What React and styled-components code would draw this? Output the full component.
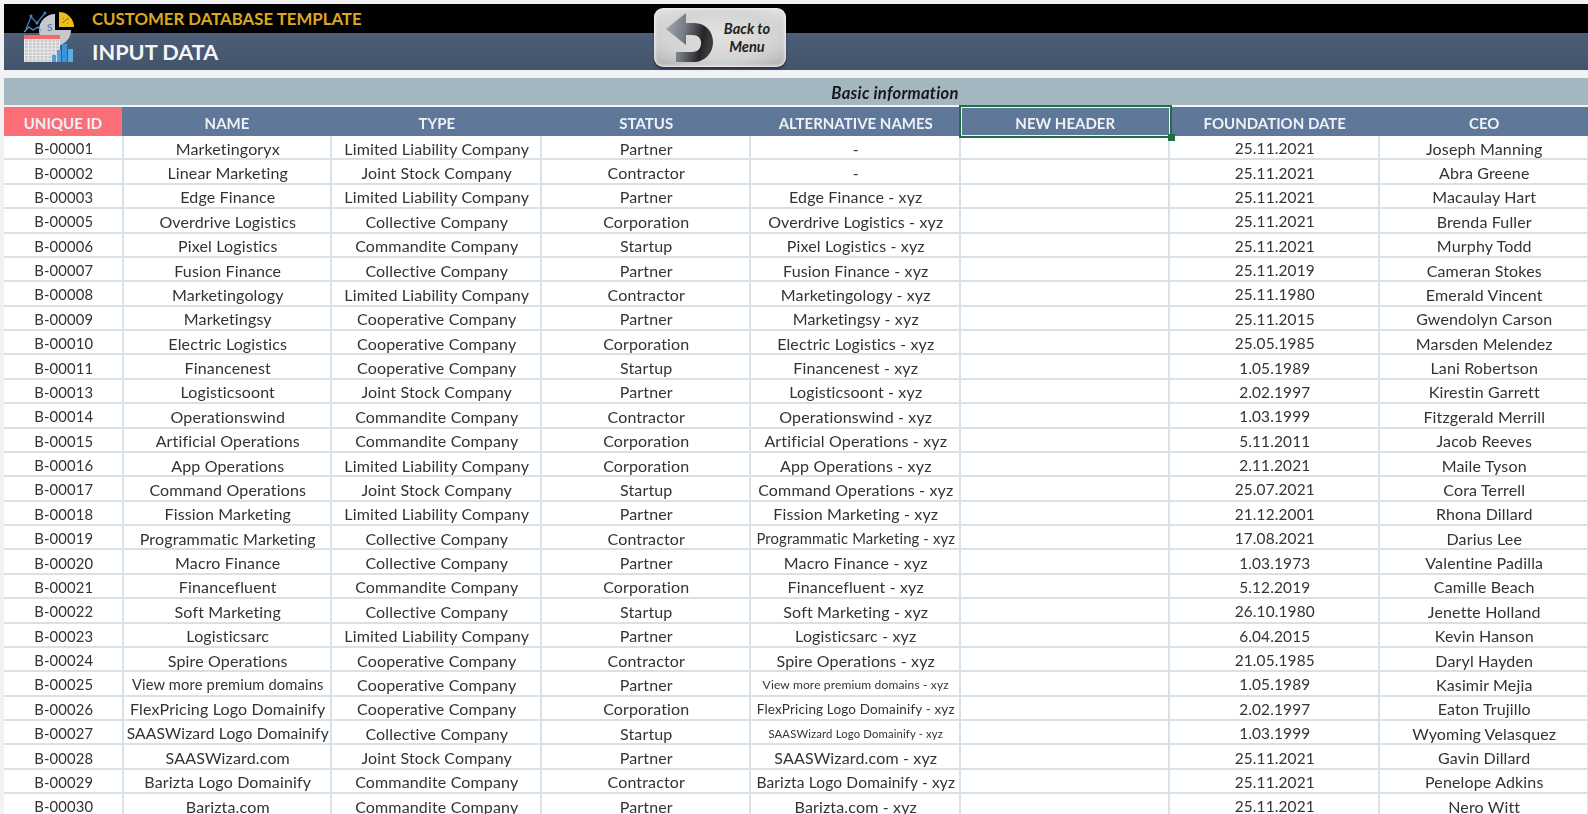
import React from "react";
import styled, { createGlobalStyle } from "styled-components";

const GlobalStyle = createGlobalStyle`
  html, body {
    margin: 0;
    padding: 0;
    background-color: #f1f2f3;
  }
`;

const COLUMNS = "119.5px 208.5px 209.5px 209.5px 209.5px 209.5px 209.5px 209.5px";
const HEADER_COLUMNS = "118px 210px 209.5px 209.5px 209.5px 209.5px 209.5px 209.5px";

const Page = styled.div`
  width: 1588px;
  height: 814px;
  overflow: hidden;
  padding: 4px 0 0 4px;
  box-sizing: border-box;
  font-family: Lato, "Open Sans", sans-serif;
  filter: blur(0.3px);
`;

const Banner = styled.header`
  position: relative;
  margin-bottom: 8px;
`;

const TopBar = styled.div`
  height: 29px;
  background-color: #000;
  padding-left: 88px;
  display: flex;
  align-items: center;
  color: #dca81f;
  font-size: 16.8px;
  font-weight: 700;
`;

const TitleBar = styled.div`
  height: 37px;
  background: linear-gradient(#4d5e78, #43536b);
  padding-left: 88px;
  display: flex;
  align-items: center;
  color: #f4f5f7;
  font-size: 21.7px;
  font-weight: 700;
`;

const Logo = styled.svg`
  position: absolute;
  left: 18px;
  top: 6px;
  width: 54px;
  height: 54px;
`;

const BackButton = styled.div`
  position: absolute;
  left: 650px;
  top: 4px;
  width: 132px;
  height: 59px;
  box-sizing: border-box;
  border-radius: 9px;
  background:
    radial-gradient(ellipse at 50% 45%, #e2e2e2 0%, #d4d4d4 55%, rgba(190, 190, 190, 0) 100%),
    linear-gradient(#ececec, #a6a6a6);
  box-shadow: inset 0 0 3px 1px #f4f4f4, 0 2px 2px rgba(20, 25, 35, 0.55);
  display: flex;
  align-items: center;
`;

const BackArrow = styled.svg`
  width: 62px;
  height: 59px;
  flex-shrink: 0;
`;

const BackLabel = styled.div`
  width: 62px;
  text-align: center;
  color: #222;
  font-size: 14.6px;
  line-height: 18px;
  font-weight: 700;
  font-style: italic;
`;

const SectionBar = styled.div`
  height: 27px;
  background-color: #a4b7c0;
  padding: 2px 0 0 198px;
  box-sizing: border-box;
  display: flex;
  align-items: center;
  justify-content: center;
  color: #15181c;
  font-size: 16.6px;
  letter-spacing: 0.25px;
  font-weight: 700;
  font-style: italic;
`;

const HeaderRow = styled.div`
  display: grid;
  grid-template-columns: ${HEADER_COLUMNS};
  height: 29px;
  margin-top: 2px;
`;

const HeaderCell = styled.div`
  position: relative;
  display: flex;
  align-items: center;
  justify-content: center;
  padding-top: 2px;
  box-sizing: border-box;
  background-color: ${(p) => (p.$accent ? "#fb6d77" : "#5f7899")};
  color: #eef1f5;
  font-size: 15px;
  font-weight: 700;
  white-space: nowrap;

  ${(p) =>
    p.$selected &&
    `
    box-shadow: 0 0 0 2px #1f6f45, inset 0 0 0 1px #f2f5f7;
    z-index: 1;
    &::after {
      content: "";
      position: absolute;
      right: -5px;
      bottom: -5px;
      width: 7px;
      height: 7px;
      background-color: #1f6f45;
    }
  `}
`;

const Rows = styled.div`
  display: grid;
  grid-auto-rows: 24.38px;
`;

const Row = styled.div`
  display: grid;
  grid-template-columns: ${COLUMNS};
  background-color: #fff;
`;

const Cell = styled.div`
  display: flex;
  align-items: center;
  justify-content: center;
  padding: 2px 0 0 2px;
  box-sizing: border-box;
  border-right: 2px solid #d8e0ea;
  border-bottom: 2px solid #d8e0ea;
  color: #333;
  font-size: ${(p) => p.$size || 16}px;
  letter-spacing: 0.15px;
  white-space: nowrap;
`;

const HEADERS = [
  "UNIQUE ID",
  "NAME",
  "TYPE",
  "STATUS",
  "ALTERNATIVE NAMES",
  "NEW HEADER",
  "FOUNDATION DATE",
  "CEO",
];

const LLC = "Limited Liability Company";
const JSC = "Joint Stock Company";
const COL = "Collective Company";
const CMD = "Commandite Company";
const COOP = "Cooperative Company";

const DATA = [
  ["B-00001", "Marketingoryx", LLC, "Partner", "-", "25.11.2021", "Joseph Manning"],
  ["B-00002", "Linear Marketing", JSC, "Contractor", "-", "25.11.2021", "Abra Greene"],
  ["B-00003", "Edge Finance", LLC, "Partner", "Edge Finance - xyz", "25.11.2021", "Macaulay Hart"],
  ["B-00005", "Overdrive Logistics", COL, "Corporation", "Overdrive Logistics - xyz", "25.11.2021", "Brenda Fuller"],
  ["B-00006", "Pixel Logistics", CMD, "Startup", "Pixel Logistics - xyz", "25.11.2021", "Murphy Todd"],
  ["B-00007", "Fusion Finance", COL, "Partner", "Fusion Finance - xyz", "25.11.2019", "Cameran Stokes"],
  ["B-00008", "Marketingology", LLC, "Contractor", "Marketingology - xyz", "25.11.1980", "Emerald Vincent"],
  ["B-00009", "Marketingsy", COOP, "Partner", "Marketingsy - xyz", "25.11.2015", "Gwendolyn Carson"],
  ["B-00010", "Electric Logistics", COOP, "Corporation", "Electric Logistics - xyz", "25.05.1985", "Marsden Melendez"],
  ["B-00011", "Financenest", COOP, "Startup", "Financenest - xyz", "1.05.1989", "Lani Robertson"],
  ["B-00013", "Logisticsoont", JSC, "Partner", "Logisticsoont - xyz", "2.02.1997", "Kirestin Garrett"],
  ["B-00014", "Operationswind", CMD, "Contractor", "Operationswind - xyz", "1.03.1999", "Fitzgerald Merrill"],
  ["B-00015", "Artificial Operations", CMD, "Corporation", "Artificial Operations - xyz", "5.11.2011", "Jacob Reeves"],
  ["B-00016", "App Operations", LLC, "Corporation", "App Operations - xyz", "2.11.2021", "Maile Tyson"],
  ["B-00017", "Command Operations", JSC, "Startup", "Command Operations - xyz", "25.07.2021", "Cora Terrell"],
  ["B-00018", "Fission Marketing", LLC, "Partner", "Fission Marketing - xyz", "21.12.2001", "Rhona Dillard"],
  ["B-00019", "Programmatic Marketing", COL, "Contractor", "Programmatic Marketing - xyz", "17.08.2021", "Darius Lee"],
  ["B-00020", "Macro Finance", COL, "Partner", "Macro Finance - xyz", "1.03.1973", "Valentine Padilla"],
  ["B-00021", "Financefluent", CMD, "Corporation", "Financefluent - xyz", "5.12.2019", "Camille Beach"],
  ["B-00022", "Soft Marketing", COL, "Startup", "Soft Marketing - xyz", "26.10.1980", "Jenette Holland"],
  ["B-00023", "Logisticsarc", LLC, "Partner", "Logisticsarc - xyz", "6.04.2015", "Kevin Hanson"],
  ["B-00024", "Spire Operations", COOP, "Contractor", "Spire Operations - xyz", "21.05.1985", "Daryl Hayden"],
  ["B-00025", "View more premium domains", COOP, "Partner", "View more premium domains - xyz", "1.05.1989", "Kasimir Mejia"],
  ["B-00026", "FlexPricing Logo Domainify", COOP, "Corporation", "FlexPricing Logo Domainify - xyz", "2.02.1997", "Eaton Trujillo"],
  ["B-00027", "SAASWizard Logo Domainify", COL, "Startup", "SAASWizard Logo Domainify - xyz", "1.03.1999", "Wyoming Velasquez"],
  ["B-00028", "SAASWizard.com", JSC, "Partner", "SAASWizard.com - xyz", "25.11.2021", "Gavin Dillard"],
  ["B-00029", "Barizta Logo Domainify", CMD, "Contractor", "Barizta Logo Domainify - xyz", "25.11.2021", "Penelope Adkins"],
  ["B-00030", "Barizta.com", CMD, "Partner", "Barizta.com - xyz", "25.11.2021", "Nero Witt"],
];

// cells that Excel shrank to fit the column
const SHRUNK = {
  "View more premium domains": 14.7,
  "SAASWizard Logo Domainify": 15.6,
  "Programmatic Marketing - xyz": 14.8,
  "View more premium domains - xyz": 12,
  "FlexPricing Logo Domainify - xyz": 13.5,
  "SAASWizard Logo Domainify - xyz": 11.3,
  "Barizta Logo Domainify - xyz": 15.5,
};

const ID_SIZE = 14.8;
const DATE_SIZE = 15.4;

function LogoIcon() {
  const dots = [];
  for (let r = 0; r < 7; r++) {
    for (let c = 0; c < 9; c++) {
      dots.push(<rect key={`${r}-${c}`} x={23 + c * 3.9} y={39.5 + r * 3.3} width="2.9" height="2.4" fill="#c9c9c9" />);
    }
  }
  return (
    <Logo viewBox="20 10 54 54">
      <path d="M53 30 L53 14 A16 16 0 1 0 69 30 Z" fill="#c6c8cb" />
      <text x="45" y="31" fontSize="10" fontWeight="700" fill="#5f87b5" fontFamily="Lato, sans-serif">S</text>
      <path d="M57 27 L57 12 A15 15 0 0 1 72 27 Z" fill="#f0bd1c" />
      <path d="M60 23 L67 18 M61 18 L62 19 M65 23 L66 24" stroke="#8a6d10" strokeWidth="1" />
      <path d="M24 29 L29 17 L35 23 L43 13" fill="none" stroke="#3d7fb8" strokeWidth="1.3" />
      <circle cx="29" cy="16" r="1.6" fill="#3d7fb8" />
      <circle cx="35" cy="23" r="1.6" fill="#3d7fb8" />
      <circle cx="43" cy="13" r="1.6" fill="#3d7fb8" />
      <path d="M22 32 L27 27 L31 30 L36 27 L39 31" fill="none" stroke="#4c9ad6" strokeWidth="1.2" />
      <rect x="22" y="35" width="36" height="27" fill="#ececec" />
      <rect x="22" y="35" width="36" height="4" fill="#f2686c" />
      {dots}
      <rect x="50" y="55" width="4" height="7" fill="#4a9fe0" />
      <rect x="55" y="50" width="4" height="12" fill="#4a9fe0" />
      <rect x="60" y="44" width="5" height="18" fill="#3f93d8" />
      <rect x="66" y="49" width="5" height="13" fill="#5aaee8" />
    </Logo>
  );
}

function BackIcon() {
  return (
    <BackArrow viewBox="0 0 62 59">
      <defs>
        <linearGradient id="backFill" x1="0" x2="1" y1="0" y2="0.2">
          <stop offset="0" stopColor="#a2abb5" />
          <stop offset="0.45" stopColor="#757b82" />
          <stop offset="0.85" stopColor="#252527" />
          <stop offset="1" stopColor="#3a3a3c" />
        </linearGradient>
      </defs>
      <path
        d="M12 21 L32 5 L32 15 L40 15 C52 15 59 24 59 34 C59 46 50 54 40 54 L22 54 L22 44 L38 44 C44 44 47 40 47 35 C47 30 44 27 38 27 L32 27 L32 37 Z"
        fill="url(#backFill)"
      />
    </BackArrow>
  );
}

function App() {
  return (
    <Page>
      <GlobalStyle />
      <Banner>
        <TopBar>CUSTOMER DATABASE TEMPLATE</TopBar>
        <TitleBar>INPUT DATA</TitleBar>
        <LogoIcon />
        <BackButton>
          <BackIcon />
          <BackLabel>
            Back to
            <br />
            Menu
          </BackLabel>
        </BackButton>
      </Banner>
      <SectionBar>Basic information</SectionBar>
      <HeaderRow>
        {HEADERS.map((h, i) => (
          <HeaderCell key={h} $accent={i === 0} $selected={h === "NEW HEADER"}>
            {h}
          </HeaderCell>
        ))}
      </HeaderRow>
      <Rows>
        {DATA.map(([id, name, type, status, alt, date, ceo]) => (
          <Row key={id}>
            <Cell $size={ID_SIZE}>{id}</Cell>
            <Cell $size={SHRUNK[name]}>{name}</Cell>
            <Cell>{type}</Cell>
            <Cell>{status}</Cell>
            <Cell $size={SHRUNK[alt]}>{alt}</Cell>
            <Cell />
            <Cell $size={DATE_SIZE}>{date}</Cell>
            <Cell>{ceo}</Cell>
          </Row>
        ))}
      </Rows>
    </Page>
  );
}

export default App;
